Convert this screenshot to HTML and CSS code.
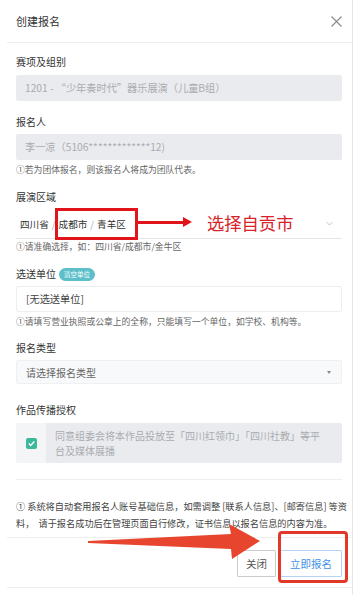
FILE: index.html
```html
<!DOCTYPE html>
<html>
<head>
<meta charset="utf-8">
<link rel="stylesheet" href="styles.css">
</head>
<body>
<div class="modal">
	<div class="modal_header">
		<span class="modal_title">创建报名</span>
		<svg class="close_icon" width="11" height="11" viewBox="0 0 11 11"><path d="M0.5 0.5L10.5 10.5M10.5 0.5L0.5 10.5" stroke="#8a8a8a" stroke-width="1.1" fill="none"/></svg>
	</div>
	<div class="modal_body">
		<div class="form_label first">赛项及组别</div>
		<div class="input disabled">1201 - “少年奏时代”器乐展演（儿童B组）</div>

		<div class="form_label">报名人</div>
		<div class="input disabled">李一凉（5106*************12)</div>
		<div class="help">①若为团体报名，则该报名人将成为团队代表。</div>

		<div class="form_label">展演区域</div>
		<div class="cascader">
			<span>四川省</span><span class="sep">/</span><span>成都市</span><span class="sep">/</span><span>青羊区</span>
			<svg class="chev" width="7" height="5" viewBox="0 0 7 5"><path d="M0.5 1L3.5 4L6.5 1" stroke="#bbb" stroke-width="0.9" fill="none"/></svg>
			<div class="note_box"></div>
			<div class="note_arrow"></div>
			<div class="note_text">选择自贡市</div>
		</div>
		<div class="help tight">①请准确选择，如：四川省/成都市/金牛区</div>

		<div class="form_label">选送单位 <span class="tag">清空单位</span></div>
		<div class="input plain">[无选送单位]</div>
		<div class="help">①请填写营业执照或公章上的全称，只能填写一个单位，如学校、机构等。</div>

		<div class="form_label type">报名类型</div>
		<div class="select">
			<span>请选择报名类型</span>
			<span class="caret"></span>
		</div>

		<div class="form_label auth">作品传播授权</div>
		<div class="check_group">
			<div class="check_cell">
				<svg width="11" height="11" viewBox="0 0 11 11"><rect width="11" height="11" rx="2" fill="#3cb99a"/><path d="M2.8 5.6L4.7 7.4L8.3 3.6" stroke="#fff" stroke-width="1.4" fill="none"/></svg>
			</div>
			<div class="check_text">同意组委会将本作品投放至「四川红领巾」「四川社教」等平台及媒体展播</div>
		</div>

		<div class="divider"></div>
		<div class="footnote">① 系统将自动套用报名人账号基础信息，如需调整 [联系人信息]、[邮寄信息] 等资<br>料， &nbsp;请于报名成功后在管理页面自行修改，证书信息以报名信息的内容为准。</div>
	</div>
	<div class="modal_footer">
		<button class="btn">关闭</button>
		<button class="btn primary">立即报名</button>
		<div class="note_box2"></div>
		<svg class="big_arrow" width="180" height="44" viewBox="0 0 180 44"><polygon points="0,20 143,13 141,3 172,20 144,38 143,28 0,22" fill="#e8452f"/></svg>
	</div>
</div>
</body>
</html>
```
FILE: styles.css
```css
* {margin: 0; padding: 0; box-sizing: border-box;}
body {background: #fff; font-family: "Noto Sans CJK SC", "Noto Sans", sans-serif; color: #333;}

.modal {margin-left: 7px; width: 346px; height: 595px; border-right: 1px solid #e6e6e6; position: relative;}
.modal_header {height: 43px; display: flex; align-items: center; justify-content: space-between; padding: 0 10px 0 9px; border-bottom: 1px solid #eee;}
.modal_title {font-size: 11px; color: #333;}
.close_icon {display: block;}

.modal_body {padding: 0 10px 0 9px;}
.form_label {font-size: 10px; line-height: 16px; color: #333; margin-top: 13px; margin-bottom: 4px; display: flex; align-items: center;}
.form_label.first {margin-top: 11px; margin-bottom: 5px;}
.form_label.type {margin-top: 12px;}
.form_label.auth {margin-top: 18px; margin-bottom: 5px;}

.input {height: 26px; line-height: 26px; font-size: 10.2px; padding: 0 9px; border-radius: 2px;}
.input.disabled {background: #e9ebee; color: #a9acb1;}
.input.plain {background: #fff; border: 1px solid #eceef0; color: #444; line-height: 24px;}

.help {font-size: 8.8px; line-height: 12px; color: #666; margin-top: 4px;}
.help.tight {margin-top: 2px;}

.cascader {height: 30px; margin-top: 1px; border-bottom: 1px solid #e5e5e5; display: flex; align-items: center; padding-left: 4px; font-size: 9.6px; color: #333; position: relative;}
.cascader .sep {color: #aaa; margin: 0 3px;}
.cascader .chev {margin-left: auto; margin-right: 9px;}
.note_box {position: absolute; left: 39px; top: -1px; width: 83px; height: 32px; border: 3px solid #e1141c;}
.note_arrow {position: absolute; left: 121px; top: 12px; width: 47px; height: 3px; background: #e1141c;}
.note_arrow:after {content: ""; position: absolute; right: -8px; top: -4px; border-left: 9px solid #e1141c; border-top: 5.5px solid transparent; border-bottom: 5.5px solid transparent;}
.note_text {position: absolute; left: 191px; top: 3px; font-size: 17.3px; line-height: 22px; color: #d8232a;}

.tag {display: inline-block; margin-left: 3px; height: 13px; line-height: 13px; padding: 0 5px; border-radius: 7px; background: #5cbfca; color: #fff; font-size: 6.5px;}

.select {height: 24px; background: #f8f9fa; border: 1px solid #eef0f2; border-radius: 2px; display: flex; align-items: center; padding: 0 9px; font-size: 10px; color: #666;}
.select .caret {margin-left: auto; border-top: 3px solid #888; border-left: 2.5px solid transparent; border-right: 2.5px solid transparent; margin-right: 1px;}

.check_group {display: flex; height: 40px; border-radius: 2px; overflow: hidden;}
.check_cell {width: 30px; background: #f4f5f6; display: flex; align-items: center; justify-content: center;}
.check_cell svg {display: block;}
.check_text {flex: 1; background: #e9ebee; color: #a9acb1; font-size: 10px; line-height: 15px; padding: 5px 14px 0 9px;}

.divider {height: 1px; background: #eee; margin-top: 16px;}
.footnote {font-size: 9.2px; line-height: 16.5px; color: #444; margin-top: 18px; white-space: nowrap;}

.modal_footer {position: absolute; left: 0; right: 0; top: 537px; height: 51px; border-top: 1px solid #eee; border-bottom: 1px solid #eee; display: flex; justify-content: flex-end; align-items: flex-start; padding: 12px 10px 0 0; gap: 4px;}
.btn {height: 27px; padding: 0 8px; font-family: inherit; font-size: 10.5px; color: #555; background: #fff; border: 1px solid #ccc; border-radius: 1px;}
.btn.primary {color: #3f8fe6; border-color: #b5d3f5; padding: 0 9px;}
.note_box2 {position: absolute; left: 271px; top: -7px; width: 70px; height: 52px; border: 3px solid #e2382a; border-radius: 4px;}
.big_arrow {position: absolute; left: 81px; top: -17px;}
```
